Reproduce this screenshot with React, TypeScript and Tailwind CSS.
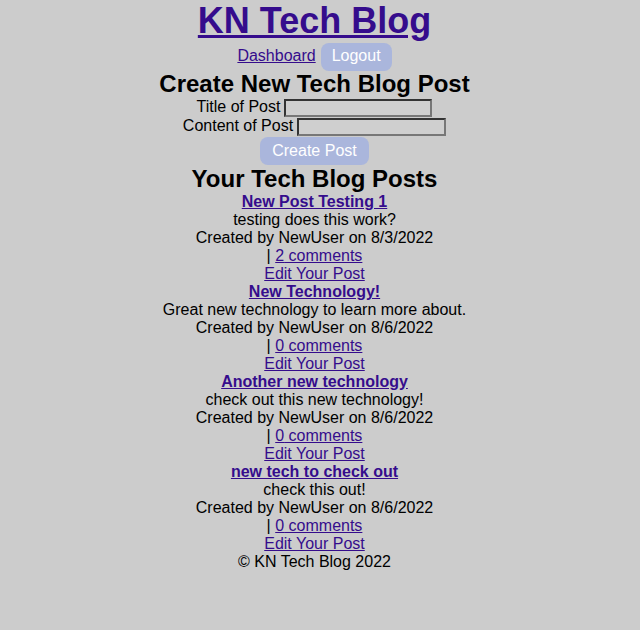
import React from "react";

const posts = [
  { title: "New Post Testing 1", body: "testing does this work?", date: "8/3/2022", comments: 2 },
  { title: "New Technology!", body: "Great new technology to learn more about.", date: "8/6/2022", comments: 0 },
  { title: "Another new technology", body: "check out this new technology!", date: "8/6/2022", comments: 0 },
  { title: "new tech to check out", body: "check this out!", date: "8/6/2022", comments: 0 },
];

const link = "text-[#350c8c] underline";
const inputCls =
  "h-[18px] border-2 border-t-[#333] border-l-[#333] border-b-[#777] border-r-[#777] bg-[#cfcfcf]";

export default function App() {
  return (
    <div className="min-h-[630px] w-full bg-[#cccccc] text-black" style={{ fontFamily: '"Liberation Sans", Arial, sans-serif' }}>
      <div className="w-[629px] flex flex-col items-center text-[16px] leading-[18px]">
        <h1 className="text-[36px] font-bold leading-[41px]">
          <a href="#" className={link}>KN Tech Blog</a>
        </h1>
        <nav className="flex items-start h-[29px] gap-[5px]">
          <a href="#" className={`${link} mt-[6px]`}>Dashboard</a>
          <button className="mt-[2px] h-[28px] px-[11px] pt-[4px] pb-[6px] leading-[18px] rounded-lg bg-[#aab6dc] text-white text-[16px]">Logout</button>
        </nav>
        <h2 className="text-[24px] font-bold leading-[28px]">Create New Tech Blog Post</h2>
        <form className="flex flex-col items-center" onSubmit={(e) => e.preventDefault()}>
          <div className="flex items-start h-[19px] gap-[4px]">
            <label>Title of Post</label>
            <input className={`w-[148px] mt-[1px] ${inputCls}`} />
          </div>
          <div className="flex items-start h-[19px] gap-[4px]">
            <label>Content of Post</label>
            <input className={`w-[149px] mt-[1px] ${inputCls}`} />
          </div>
          <button className="mt-[1px] h-[28px] w-[109px] rounded-lg bg-[#aab6dc] text-white text-[16px]">Create Post</button>
        </form>
        <h2 className="text-[24px] font-bold leading-[28px]">Your Tech Blog Posts</h2>
        {posts.map((p) => (
          <div key={p.title} className="flex flex-col items-center">
            <a href="#" className={`${link} font-bold`}>{p.title}</a>
            <p>{p.body}</p>
            <p>Created by NewUser on {p.date}</p>
            <p>| <a href="#" className={link}>{p.comments} comments</a></p>
            <a href="#" className={link}>Edit Your Post</a>
          </div>
        ))}
        <footer>© KN Tech Blog 2022</footer>
      </div>
    </div>
  );
}
